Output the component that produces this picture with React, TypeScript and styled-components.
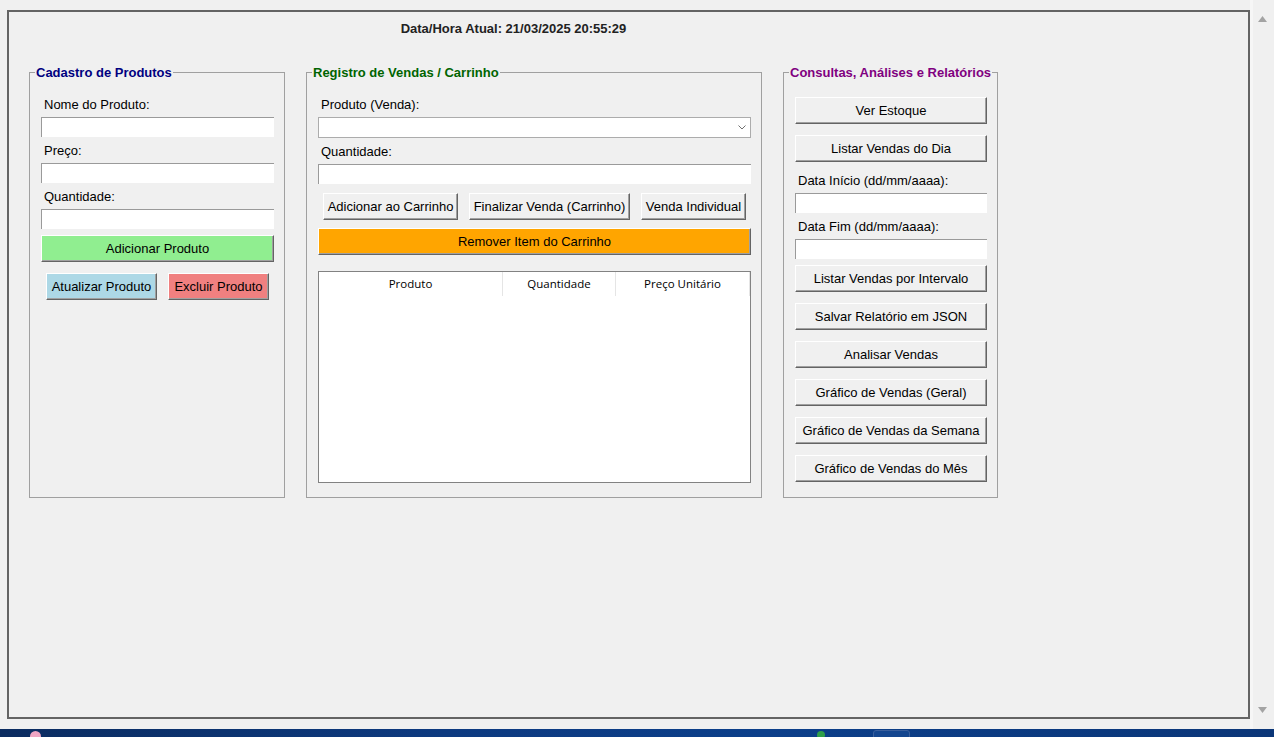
import React from "react";
import styled, { createGlobalStyle } from "styled-components";

const GlobalStyle = createGlobalStyle`
  html, body { margin: 0; padding: 0; background: #f0f0f0; }
  body {
    font-family: "Liberation Sans", Arial, sans-serif;
    font-size: 13px;
    color: #000;
  }
  *, *::before, *::after { box-sizing: border-box; }
`;

const Screen = styled.div`
  width: 1274px;
  height: 737px;
  display: flex;
  flex-direction: column;
  overflow: hidden;
  background: #f0f0f0;
`;

const Desktop = styled.div`
  flex: 1;
  display: flex;
  min-height: 0;
`;

const Window = styled.div`
  width: 1243px;
  height: 709px;
  margin: 10px 0 0 7px;
  border: 2px solid #646464;
  padding: 9px 0 0 20px;
`;

const Layout = styled.div`
  width: 969px;
  display: grid;
  grid-template-columns: 256px 456px 215px;
  column-gap: 21px;
  row-gap: 29px;
`;

const Clock = styled.div`
  grid-column: 1 / -1;
  text-align: center;
  font-weight: bold;
  font-size: 13px;
  line-height: 15px;
  color: #222;
`;

const Frame = styled.fieldset`
  margin: 0;
  padding: 0;
  min-width: 0;
  border: 1px solid #a0a0a0;
`;

const Title = styled.legend<{ $color: string }>`
  margin-left: 5px;
  padding: 0 1px;
  font-weight: bold;
  font-size: 13px;
  line-height: 15px;
  color: ${(p) => p.$color};
`;

const FrameBody = styled.div`
  display: flex;
  flex-direction: column;
  padding: 11px 10px 14px 11px;
`;

const FieldLabel = styled.div`
  height: 26px;
  padding: 6px 0 5px 3px;
  line-height: 15px;
  white-space: nowrap;
`;

const Entry = styled.input`
  display: block;
  width: 100%;
  height: 20px;
  margin: 0;
  padding: 0 3px;
  border: none;
  border-top: 1px solid #9a9a9a;
  border-left: 1px solid #9a9a9a;
  background: #fff;
  font: 13px "Liberation Sans", Arial, sans-serif;
  outline: none;
`;

const Combo = styled.div`
  height: 21px;
  border: 1px solid #acacac;
  background: #fff;
  display: flex;
  align-items: center;
  justify-content: flex-end;
  padding-right: 4px;
`;

const Btn = styled.button<{ $bg?: string; $w?: number; $mt?: number }>`
  flex: none;
  height: 27px;
  width: ${(p) => (p.$w ? `${p.$w}px` : "100%")};
  margin: ${(p) => p.$mt ?? 0}px 0 0 0;
  padding: 0;
  background: ${(p) => p.$bg ?? "#f0f0f0"};
  border: 1px solid;
  border-color: #ffffff #646464 #646464 #ffffff;
  box-shadow: inset -1px -1px 0 #a0a0a0;
  font: 13px/15px "Liberation Sans", Arial, sans-serif;
  color: #000;
  white-space: nowrap;
  cursor: default;
`;

const BtnRow = styled.div<{ $mt: number }>`
  display: flex;
  justify-content: center;
  gap: 11px;
  margin-top: ${(p) => p.$mt}px;
`;

const Gap = styled.div<{ $h: number }>`
  height: ${(p) => p.$h}px;
  flex: none;
`;

const Tree = styled.div`
  margin-top: 16px;
  height: 212px;
  border: 1px solid #828282;
  background: #fff;
`;

const TreeHead = styled.div`
  display: grid;
  grid-template-columns: 184px 113px 134px;
`;

const HeadCell = styled.div`
  height: 24px;
  line-height: 23px;
  text-align: center;
  border-right: 1px solid #e5e5e5;
  font-family: "Open Sans", "Noto Sans", sans-serif;
  font-size: 11.5px;
  color: #000;
`;

const ScrollBar = styled.div`
  flex: 1;
  display: flex;
  flex-direction: column;
  justify-content: space-between;
  padding: 16px 0 16px 5px;
  border-left: 3px solid #f6f6f6;
`;

const Taskbar = styled.div`
  height: 8px;
  flex: none;
  display: flex;
  overflow: hidden;
  background: linear-gradient(90deg, #0b2c60 0%, #0d3a80 35%, #0c3f8a 60%, #0b3678 100%);
`;

const TrayIcon = styled.div<{ $color: string; $ml: number; $size: number }>`
  flex: none;
  width: ${(p) => p.$size}px;
  height: ${(p) => p.$size}px;
  margin: 2px 0 0 ${(p) => p.$ml}px;
  border-radius: 50%;
  background: ${(p) => p.$color};
`;

const TaskTab = styled.div<{ $ml: number }>`
  flex: none;
  width: 37px;
  height: 12px;
  margin: 1px 0 0 ${(p) => p.$ml}px;
  border: 1px solid #3a5f9c;
  border-radius: 3px;
  background: #14468f;
`;

const Chevron = () => (
  <svg width="8" height="5" viewBox="0 0 8 5">
    <polyline points="0.5,0.5 4,4 7.5,0.5" fill="none" stroke="#707070" strokeWidth="1" />
  </svg>
);

const Arrow = ({ up }: { up?: boolean }) => (
  <svg width="9" height="6" viewBox="0 0 9 6">
    <polygon points={up ? "0,6 4.5,0 9,6" : "0,0 4.5,6 9,0"} fill="#a3a3a3" />
  </svg>
);

const reportButtons = [
  "Listar Vendas por Intervalo",
  "Salvar Relatório em JSON",
  "Analisar Vendas",
  "Gráfico de Vendas (Geral)",
  "Gráfico de Vendas da Semana",
  "Gráfico de Vendas do Mês",
];

export default function App() {
  return (
    <>
      <GlobalStyle />
      <Screen>
        <Desktop>
          <Window>
            <Layout>
              <Clock>Data/Hora Atual: 21/03/2025 20:55:29</Clock>

              <Frame>
                <Title $color="#000080">Cadastro de Produtos</Title>
                <FrameBody>
                  <FieldLabel>Nome do Produto:</FieldLabel>
                  <Entry />
                  <FieldLabel>Preço:</FieldLabel>
                  <Entry />
                  <FieldLabel>Quantidade:</FieldLabel>
                  <Entry />
                  <Btn $bg="#90ee90" $mt={6}>Adicionar Produto</Btn>
                  <BtnRow $mt={11}>
                    <Btn $bg="#add8e6" $w={111}>Atualizar Produto</Btn>
                    <Btn $bg="#f08080" $w={101}>Excluir Produto</Btn>
                  </BtnRow>
                </FrameBody>
              </Frame>

              <Frame>
                <Title $color="#006400">Registro de Vendas / Carrinho</Title>
                <FrameBody>
                  <FieldLabel>Produto (Venda):</FieldLabel>
                  <Combo>
                    <Chevron />
                  </Combo>
                  <FieldLabel>Quantidade:</FieldLabel>
                  <Entry />
                  <BtnRow $mt={9}>
                    <Btn $w={135}>Adicionar ao Carrinho</Btn>
                    <Btn $w={161}>Finalizar Venda (Carrinho)</Btn>
                    <Btn $w={105}>Venda Individual</Btn>
                  </BtnRow>
                  <Btn $bg="#ffa500" $mt={8}>Remover Item do Carrinho</Btn>
                  <Tree>
                    <TreeHead>
                      <HeadCell>Produto</HeadCell>
                      <HeadCell>Quantidade</HeadCell>
                      <HeadCell>Preço Unitário</HeadCell>
                    </TreeHead>
                  </Tree>
                </FrameBody>
              </Frame>

              <Frame>
                <Title $color="#800080">Consultas, Análises e Relatórios</Title>
                <FrameBody>
                  <Btn $mt={6}>Ver Estoque</Btn>
                  <Btn $mt={11}>Listar Vendas do Dia</Btn>
                  <Gap $h={5} />
                  <FieldLabel>Data Início (dd/mm/aaaa):</FieldLabel>
                  <Entry />
                  <FieldLabel>Data Fim (dd/mm/aaaa):</FieldLabel>
                  <Entry />
                  {reportButtons.map((t, i) => (
                    <Btn key={t} $mt={i === 0 ? 6 : 11}>
                      {t}
                    </Btn>
                  ))}
                </FrameBody>
              </Frame>
            </Layout>
          </Window>
          <ScrollBar>
            <Arrow up />
            <Arrow />
          </ScrollBar>
        </Desktop>
        <Taskbar>
          <TrayIcon $color="#f0a6c4" $ml={30} $size={11} />
          <TrayIcon $color="#2f9e4a" $ml={776} $size={8} />
          <TaskTab $ml={48} />
        </Taskbar>
      </Screen>
    </>
  );
}
